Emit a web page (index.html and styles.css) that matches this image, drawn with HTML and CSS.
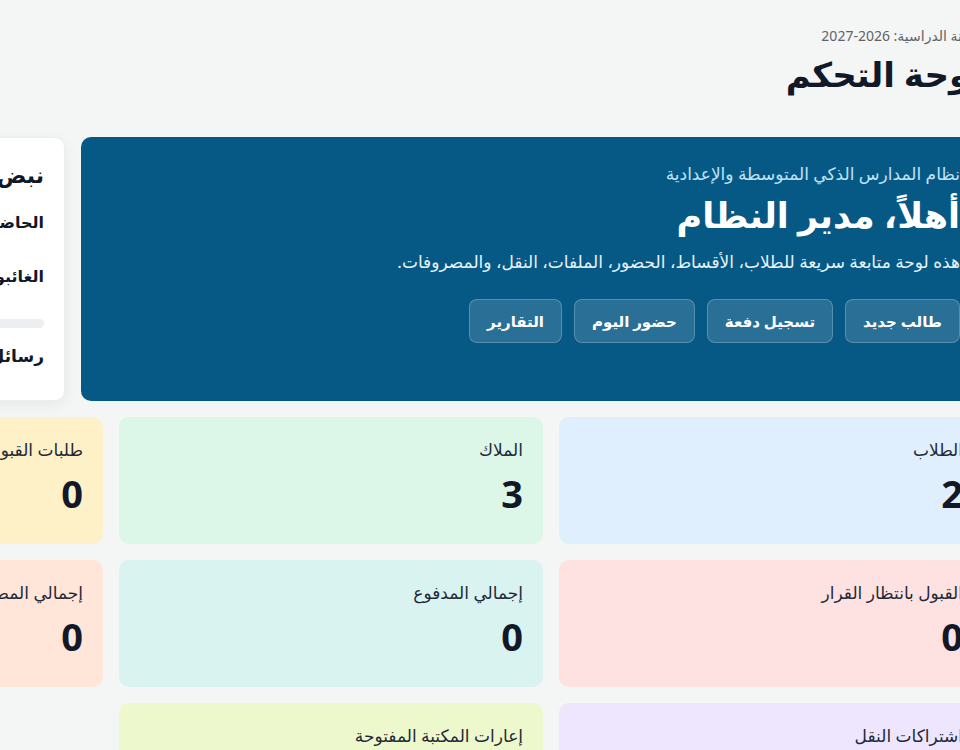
FILE: index.html
```html
<!DOCTYPE html>
<html lang="ar">
<head>
  <meta charset="UTF-8" />
  <meta name="viewport" content="width=device-width, initial-scale=1.0"/>
  <title>لوحة التحكم</title>
  <link rel="stylesheet" href="styles.css">
</head>
<body>

  <div class="page" dir="rtl">

    <div class="page-head">
      <p class="year">السنة الدراسية: 2026-2027</p>
      <h1>لوحة التحكم</h1>
    </div>

    <section class="top">
      <div class="hero">
        <p class="hero-sub">نظام المدارس الذكي المتوسطة والإعدادية</p>
        <h2>أهلاً، مدير النظام</h2>
        <p class="hero-desc">هذه لوحة متابعة سريعة للطلاب، الأقساط، الحضور، الملفات، النقل، والمصروفات.</p>
        <div class="hero-actions">
          <a href="#" class="hero-btn">طالب جديد</a>
          <a href="#" class="hero-btn">تسجيل دفعة</a>
          <a href="#" class="hero-btn">حضور اليوم</a>
          <a href="#" class="hero-btn">التقارير</a>
        </div>
      </div>

      <div class="pulse">
        <h3>نبض اليوم</h3>
        <div class="pulse-row"><span>الحاضرون اليوم</span><b>0</b></div>
        <div class="pulse-row"><span>الغائبون اليوم</span><b>0</b></div>
        <div class="pulse-bar"><div class="pulse-fill"></div></div>
        <div class="pulse-row msg"><span>رسائل غير مقروءة</span><b>0</b></div>
      </div>
    </section>

    <section class="stats">
      <div class="stat blue">
        <div class="stat-label">الطلاب</div>
        <div class="stat-value">2</div>
      </div>
      <div class="stat green">
        <div class="stat-label">الملاك</div>
        <div class="stat-value">3</div>
      </div>
      <div class="stat yellow">
        <div class="stat-label">طلبات القبول</div>
        <div class="stat-value">0</div>
      </div>

      <div class="stat red">
        <div class="stat-label">القبول بانتظار القرار</div>
        <div class="stat-value">0</div>
      </div>
      <div class="stat teal">
        <div class="stat-label">إجمالي المدفوع</div>
        <div class="stat-value">0</div>
      </div>
      <div class="stat orange">
        <div class="stat-label">إجمالي المصروفات</div>
        <div class="stat-value">0</div>
      </div>

      <div class="stat purple">
        <div class="stat-label">اشتراكات النقل</div>
        <div class="stat-value">0</div>
      </div>
      <div class="stat lime">
        <div class="stat-label">إعارات المكتبة المفتوحة</div>
        <div class="stat-value">0</div>
      </div>
    </section>

  </div>

</body>
</html>
```

FILE: styles.css
```css
html, body {
  overflow-x: hidden;
}

body {
  margin: 0;
  font-family: "Noto Sans", "DejaVu Sans", sans-serif;
  background-color: #f4f5f5;
  color: #111827;
}

.page {
  width: 1304px;
  margin-left: -321px;
  padding: 26px 0 40px;
}

/* Page heading */
.page-head {
  margin-bottom: 41px;
}

.year {
  margin: 0;
  font-size: 14px;
  line-height: 20px;
  color: #5f6368;
}

.page-head h1 {
  margin: 6px 0 0;
  font-size: 34px;
  line-height: 44px;
  font-weight: bold;
  color: #111827;
}

/* Welcome banner + side card */
.top {
  display: grid;
  grid-template-columns: 902px 386px;
  gap: 16px;
}

.hero {
  background-color: #075985;
  color: white;
  border-radius: 10px;
  padding: 24px 23px 58px;
}

.hero-sub {
  margin: 0;
  font-size: 17px;
  line-height: 26px;
  color: #bfe3fb;
}

.hero h2 {
  margin: 4px 0 0;
  font-size: 35px;
  line-height: 48px;
  font-weight: bold;
}

.hero-desc {
  margin: 10px 0 0;
  font-size: 17px;
  line-height: 26px;
  color: #e6f3fc;
}

.hero-actions {
  display: flex;
  gap: 12px;
  margin-top: 24px;
}

.hero-btn {
  display: flex;
  align-items: center;
  height: 44px;
  box-sizing: border-box;
  padding: 0 17px;
  border-radius: 8px;
  background-color: rgba(255, 255, 255, 0.14);
  border: 1px solid rgba(255, 255, 255, 0.22);
  color: white;
  font-size: 15px;
  font-weight: bold;
  text-decoration: none;
}

.pulse {
  background-color: white;
  border-radius: 10px;
  border: 1px solid #eceeef;
  box-shadow: 0 4px 15px rgba(0, 0, 0, 0.06);
  padding: 20px 20px;
}

.pulse h3 {
  margin: 0 0 19px;
  font-size: 22px;
  line-height: 32px;
  font-weight: bold;
}

.pulse-row {
  display: flex;
  justify-content: space-between;
  font-size: 16px;
  font-weight: bold;
  line-height: 26px;
  margin-bottom: 28px;
}

.pulse-bar {
  height: 9px;
  border-radius: 6px;
  background-color: #eceeef;
  margin: 30px 0 15px;
}

.pulse-fill {
  width: 0;
  height: 100%;
}

.pulse-row.msg {
  font-size: 17px;
  margin-bottom: 0;
}

/* Stat cards */
.stats {
  display: grid;
  grid-template-columns: repeat(3, 1fr);
  gap: 16px;
  margin-top: 16px;
}

.stat {
  min-height: 127px;
  box-sizing: border-box;
  padding: 20px 20px;
  border-radius: 10px;
}

.stat-label {
  font-size: 17px;
  line-height: 26px;
  color: #1f2937;
}

.stat-value {
  margin-top: 7px;
  font-size: 38px;
  line-height: 46px;
  font-weight: bold;
  color: #111827;
}

.blue   { background-color: #dfeffd; }
.green  { background-color: #dcf6e7; }
.yellow { background-color: #fef0c7; }
.red    { background-color: #fee1e1; }
.teal   { background-color: #d9f3f0; }
.orange { background-color: #ffe6d8; }
.purple { background-color: #ede6fe; }
.lime   { background-color: #edf8cd; }
```
